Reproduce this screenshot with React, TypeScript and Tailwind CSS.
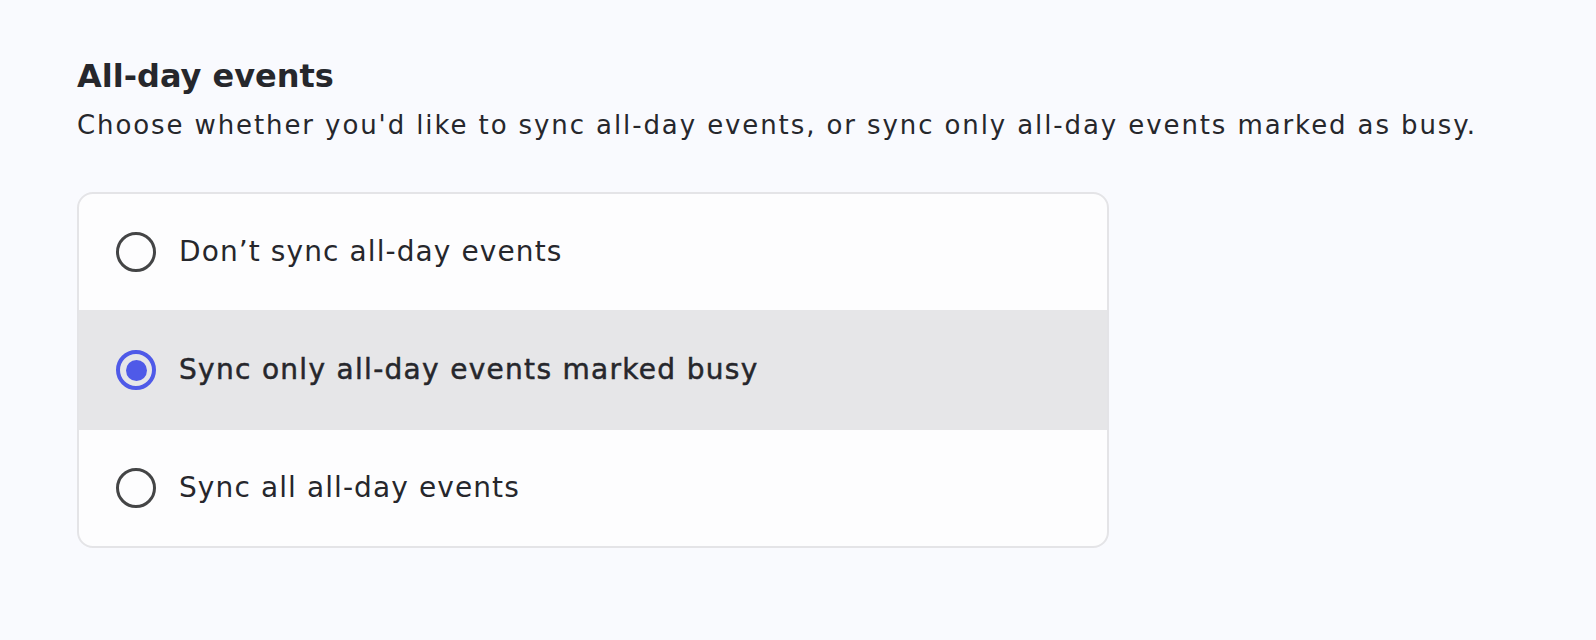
import { useState } from "react";

const options = [
  { id: "none", label: "Don’t sync all-day events" },
  { id: "busy", label: "Sync only all-day events marked busy" },
  { id: "all", label: "Sync all all-day events" },
];

function Radio({ checked }: { checked: boolean }) {
  return checked ? (
    <span className="flex h-[40px] w-[40px] shrink-0 items-center justify-center rounded-full border-[4px] border-[#4f5ae8]">
      <span className="h-[21px] w-[21px] rounded-full bg-[#4f5ae8]" />
    </span>
  ) : (
    <span className="h-[40px] w-[40px] shrink-0 rounded-full border-[3.5px] border-[#444546]" />
  );
}

export default function App() {
  const [value, setValue] = useState("busy");

  return (
    <div className="min-h-[640px] bg-[#f9fafe] px-[77px] pt-[56px] text-[#26272c] [font-family:'DejaVu_Sans',sans-serif]">
      <h2 className="text-[32px] font-bold leading-[40px]">All-day events</h2>
      <p className="mt-[12px] text-[26px] leading-[34px] tracking-[1.9px]">
        Choose whether you'd like to sync all-day events, or sync only all-day events marked as busy.
      </p>

      <div className="mt-[50px] w-[1032px] overflow-hidden rounded-[16px] border-2 border-[#e4e4e7] bg-[#fdfdfe]">
        {options.map((o) => {
          const checked = value === o.id;
          return (
            <button
              key={o.id}
              onClick={() => setValue(o.id)}
              className={`flex w-full items-center gap-[23px] px-[37px] text-left text-[28px] ${
                checked
                  ? "h-[120px] bg-[#e6e6e8] tracking-[1.3px] [-webkit-text-stroke:0.5px_#26272c]"
                  : "h-[116px] tracking-[1.1px]"
              }`}
            >
              <Radio checked={checked} />
              <span>{o.label}</span>
            </button>
          );
        })}
      </div>
    </div>
  );
}
